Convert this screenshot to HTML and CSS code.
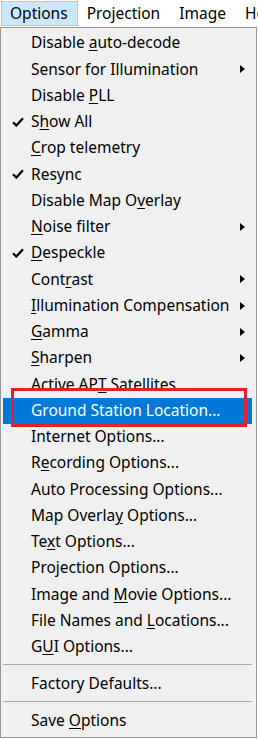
FILE: index.html
```html
<!DOCTYPE html>
<html>
<head>
<meta charset="utf-8">
<link rel="stylesheet" href="styles.css">
</head>
<body>
<div class="menubar">
  <span class="mb-item active">Options</span>
  <span class="mb-item">Projection</span>
  <span class="mb-item">Image</span>
  <span class="mb-item">Help</span>
</div>
<div class="popup">
  <div class="item"><span class="check"></span><span class="label">Disable <u>a</u>uto-decode</span></div>
  <div class="item"><span class="check"></span><span class="label">Sensor for Illumination</span><span class="arrow"></span></div>
  <div class="item"><span class="check"></span><span class="label">Disable <u>P</u>LL</span></div>
  <div class="item"><span class="check"><svg viewBox="0 0 12 10" width="12" height="10"><path d="M1 5.2 L4.3 8.6 L11 1.3" fill="none" stroke="#000" stroke-width="2.2"/></svg></span><span class="label">S<u>h</u>ow All</span></div>
  <div class="item"><span class="check"></span><span class="label"><u>C</u>rop telemetry</span></div>
  <div class="item"><span class="check"><svg viewBox="0 0 12 10" width="12" height="10"><path d="M1 5.2 L4.3 8.6 L11 1.3" fill="none" stroke="#000" stroke-width="2.2"/></svg></span><span class="label">Resync</span></div>
  <div class="item"><span class="check"></span><span class="label">Disable Map O<u>v</u>erlay</span></div>
  <div class="item"><span class="check"></span><span class="label"><u>N</u>oise filter</span><span class="arrow"></span></div>
  <div class="item"><span class="check"><svg viewBox="0 0 12 10" width="12" height="10"><path d="M1 5.2 L4.3 8.6 L11 1.3" fill="none" stroke="#000" stroke-width="2.2"/></svg></span><span class="label"><u>D</u>especkle</span></div>
  <div class="item"><span class="check"></span><span class="label">Cont<u>r</u>ast</span><span class="arrow"></span></div>
  <div class="item"><span class="check"></span><span class="label"><u>I</u>llumination Compensation</span><span class="arrow"></span></div>
  <div class="item"><span class="check"></span><span class="label"><u>G</u>amma</span><span class="arrow"></span></div>
  <div class="item"><span class="check"></span><span class="label"><u>S</u>harpen</span><span class="arrow"></span></div>
  <div class="item"><span class="check"></span><span class="label">Active AP<u>T</u> Satellites...</span></div>
  <div class="item selected"><span class="check"></span><span class="label">Ground Station Location...</span></div>
  <div class="item"><span class="check"></span><span class="label">Internet Options...</span></div>
  <div class="item"><span class="check"></span><span class="label">R<u>e</u>cording Options...</span></div>
  <div class="item"><span class="check"></span><span class="label">Auto Processing Options...</span></div>
  <div class="item"><span class="check"></span><span class="label">Map Overla<u>y</u> Options...</span></div>
  <div class="item"><span class="check"></span><span class="label">Te<u>x</u>t Options...</span></div>
  <div class="item"><span class="check"></span><span class="label">Projection Options...</span></div>
  <div class="item"><span class="check"></span><span class="label">Image and <u>M</u>ovie Options...</span></div>
  <div class="item"><span class="check"></span><span class="label">File Names and <u>L</u>ocations...</span></div>
  <div class="item"><span class="check"></span><span class="label">G<u>U</u>I Options...</span></div>
  <div class="sep sep1"></div>
  <div class="item"><span class="check"></span><span class="label">Factory Defaults...</span></div>
  <div class="sep sep2"></div>
  <div class="item"><span class="check"></span><span class="label">Save <u>O</u>ptions</span></div>
</div>
<div class="annot"></div>
</body>
</html>
```
FILE: styles.css
```css
html, body {
  margin: 0;
  padding: 0;
  background: #ffffff;
  width: 258px;
  height: 739px;
  overflow: hidden;
}
body {
  position: relative;
  font-family: "Noto Sans", "Open Sans", sans-serif;
  font-size: 15.5px;
  color: #000;
}
.menubar {
  height: 27px;
  box-sizing: border-box;
  padding-top: 1px;
  padding-left: 1px;
  display: flex;
  white-space: nowrap;
  background: #fff;
  overflow: hidden;
}
.mb-item {
  height: 25px;
  box-sizing: border-box;
  padding: 0 9px 0 8px;
  border: 1px solid transparent;
  display: flex;
  align-items: center;
  line-height: 1;
  flex: none;
}
.mb-item.active {
  background: #cce8ff;
  border-color: #99d1ff;
}
.popup {
  width: 257px;
  box-sizing: border-box;
  border: 1px solid #979797;
  background: #f0f0f0;
  padding: 2px 4px 3px 2px;
}
.item {
  height: 26.26px;
  display: flex;
  align-items: center;
  white-space: nowrap;
}
.item.selected {
  background: #0078d7;
  color: #fff;
}
.check {
  width: 28px;
  flex: none;
  display: flex;
  align-items: center;
  padding-left: 9px;
  box-sizing: border-box;
}
.check svg {
  display: block;
}
.label {
  flex: 1;
  line-height: 1;
}
.label u {
  text-underline-offset: 2px;
}
.arrow {
  width: 0;
  height: 0;
  border-top: 4.5px solid transparent;
  border-bottom: 4.5px solid transparent;
  border-left: 5px solid #000;
  margin-right: 7px;
}
.sep {
  box-sizing: border-box;
}
.sep::before {
  content: "";
  display: block;
  height: 1px;
  background: #a9a9a9;
}
.sep1 {
  height: 11px;
  padding-top: 4px;
}
.sep2 {
  height: 10px;
  padding-top: 4px;
}
.annot {
  position: absolute;
  left: 11px;
  top: 388px;
  width: 236px;
  height: 39px;
  box-sizing: border-box;
  border: 3px solid #e3202c;
}
```
